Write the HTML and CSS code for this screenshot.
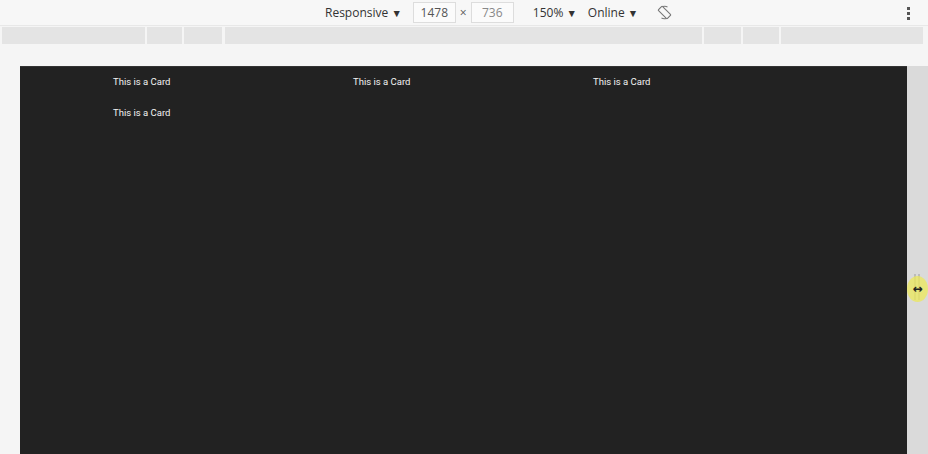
FILE: index.html
```html
<!DOCTYPE html>
<html>
<head>
<meta charset="utf-8">
<link rel="stylesheet" href="styles.css">
</head>
<body>
<div class="toolbar">
  <div class="tb-center">
    <span class="tb-item first">Responsive <span class="caret">▼</span></span>
    <span class="tb-input">1478</span>
    <span class="tb-x">×</span>
    <span class="tb-input dim">736</span>
    <span class="tb-item pct">150% <span class="caret">▼</span></span>
    <span class="tb-item">Online <span class="caret">▼</span></span>
    <svg class="rotate" width="15" height="15" viewBox="0 0 15 15"><path d="M2.2 4.5 A6.3 6.3 0 0 1 10.5 1.9 M12.8 10.5 A6.3 6.3 0 0 1 4.5 13.1" fill="none" stroke="#777" stroke-width="1.1"/><rect x="4.6" y="1.2" width="5.8" height="12.6" rx="0.8" transform="rotate(-45 7.5 7.5)" fill="#f7f7f7" stroke="#777" stroke-width="1.1"/></svg>
  </div>
  <div class="kebab"><i></i><i></i><i></i></div>
</div>
<div class="mq">
  <div class="seg s1"></div>
  <div class="seg s2"></div>
  <div class="seg s3"></div>
  <div class="seg s4"></div>
  <div class="seg s5"></div>
  <div class="seg s6"></div>
  <div class="seg s7"></div>
</div>
<div class="stage">
  <div class="viewport">
    <div class="grid">
      <div class="card">This is a Card</div>
      <div class="card">This is a Card</div>
      <div class="card">This is a Card</div>
      <div class="card">This is a Card</div>
    </div>
  </div>
  <div class="handle">
    <div class="grip"><i></i><i></i></div>
    <div class="glow"><span class="arrows">↔</span></div>
  </div>
</div>
</body>
</html>
```

FILE: styles.css
```css
* { box-sizing: border-box; }
html, body { margin: 0; padding: 0; }
body {
  width: 928px;
  height: 454px;
  overflow: hidden;
  background: #f5f5f5;
  font-family: "Open Sans", "Noto Sans", sans-serif;
}
.toolbar {
  height: 26px;
  background: #f7f7f7;
  border-bottom: 1px solid #e8e8e8;
  display: flex;
  align-items: center;
  position: relative;
}
.tb-center {
  display: flex;
  align-items: center;
  padding-left: 325px;
  font-size: 12px;
  color: #333;
}
.tb-item { white-space: nowrap; }
.tb-item.first { margin-right: 11px; }
.tb-item.pct { margin-right: 11px; }
.caret { font-size: 10.5px; color: #333; }
.tb-input {
  width: 43px;
  height: 21px;
  border: 1px solid #ddd;
  background: #fbfbfb;
  color: #555;
  font-size: 12px;
  display: flex;
  align-items: center;
  justify-content: center;
}
.tb-input.dim { color: #888; margin-right: 19px; }
.tb-x { color: #555; font-size: 12px; width: 15px; text-align: center; }
.rotate { margin-left: 19px; }
.kebab {
  position: absolute;
  left: 907px;
  top: 7px;
  display: flex;
  flex-direction: column;
  gap: 2px;
}
.kebab i { display: block; width: 3px; height: 3px; background: #555; }
.mq {
  display: flex;
  gap: 2px;
  padding: 1px 3px 0 2px;
  height: 18px;
}
.seg { background: #e4e4e4; height: 17px; }
.s1 { width: 143px; }
.s2 { width: 35px; }
.s3 { width: 38px; }
.s4 { width: 477px; margin-left: 1px; }
.s5 { width: 37px; }
.s6 { width: 36px; }
.s7 { width: 142px; }
.stage {
  display: flex;
  padding: 22px 0 0 20px;
  height: 410px;
}
.viewport {
  width: 887px;
  height: 400px;
  background: #222222;
  border-top: 1px solid #333;
}
.grid {
  display: grid;
  grid-template-columns: repeat(3, 240px);
  row-gap: 15px;
  padding: 7px 0 0 93px;
}
.card {
  color: #f2f2f2;
  font-family: Roboto, "Liberation Sans", sans-serif;
  font-size: 9.5px;
  line-height: 16px;
}
.handle {
  width: 21px;
  height: 400px;
  background: #dadada;
  position: relative;
}
.grip {
  position: absolute;
  left: 7px;
  top: 208px;
  display: flex;
  gap: 2px;
}
.grip i { display: block; width: 2px; height: 26px; background: #bbb; }
.glow {
  position: absolute;
  left: 0;
  top: 210px;
  width: 21px;
  height: 26px;
  border-radius: 50%;
  background: rgba(236, 232, 90, 0.75);
  display: flex;
  align-items: center;
  justify-content: center;
}
.arrows { font-family: "DejaVu Sans", sans-serif; font-size: 12px; font-weight: bold; color: #222; line-height: 1; }
```
